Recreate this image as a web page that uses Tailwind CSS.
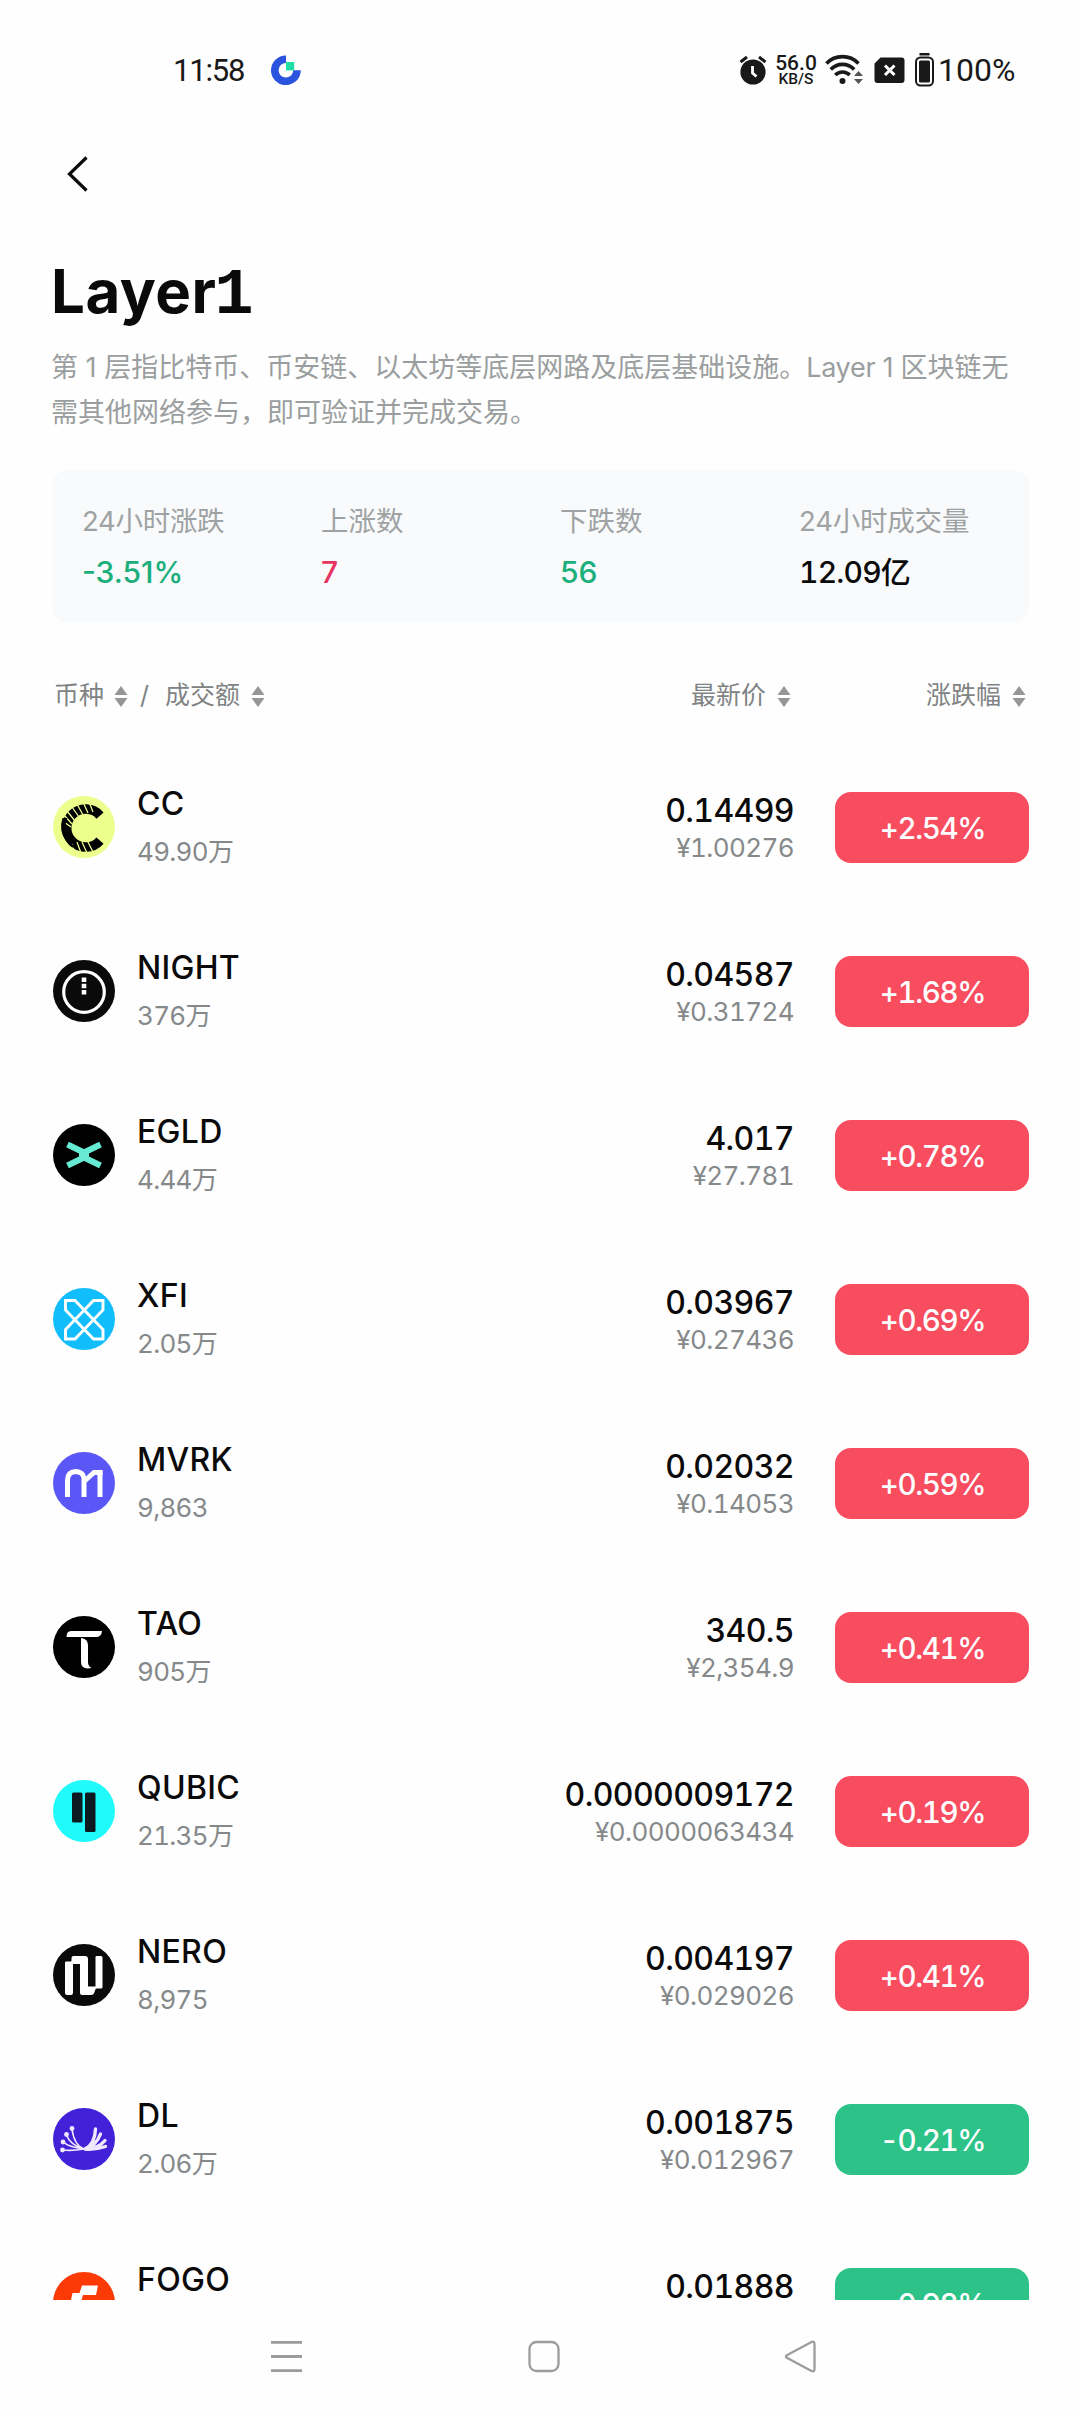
<!DOCTYPE html>
<html lang="zh-Hans">
<head>
    <meta charset="UTF-8">
    <meta name="viewport" content="width=device-width, initial-scale=1.0">
    <title>Layer1</title>
    <script src="https://cdn.jsdelivr.net/npm/@tailwindcss/browser@4"></script>
    <style>
        body {
            font-family: 'Inter', 'Noto Sans CJK SC', sans-serif;
        }
    </style>
</head>
<body class="bg-[#fefefe] text-[#0a0a0a]">
    <div class="w-[1080px] h-[2412px] flex flex-col overflow-hidden">

        <!-- 状态栏 -->
        <header class="h-[120px] shrink-0 flex items-center pt-[20px] pl-[173px] pr-[64px] font-[Roboto] text-[#191919]">
            <span class="text-[31px] leading-none tracking-[-1.200px] w-[98px]">11:58</span>
            <svg class="size-[30px]" viewBox="0 0 30 30">
                <path d="M15 4.2A11.1 11.1 0 1 0 26 15.3" fill="none" stroke="#2a54de" stroke-width="7.6"/>
                <path d="M15 7h8.2v8.4H15z" fill="#20dfa6"/>
            </svg>
            <div class="ml-auto flex items-center">
                <svg class="w-[28px] h-[30px]" viewBox="0 0 28 30">
                    <circle cx="14" cy="17" r="12.6" fill="#191919"/>
                    <path d="M1.5 7 8 2M26.500 7 20 2" stroke="#191919" stroke-width="3" fill="none"/>
                    <path d="M13.500 11v7l4 3.500" stroke="#fff" stroke-width="2.800" fill="none"/>
                </svg>
                <div class="ml-[8px] w-[42px] flex flex-col items-center font-medium mt-[1px]">
                    <span class="text-[21px] leading-[18px]">56.0</span>
                    <span class="text-[15.500px] leading-[15px]">KB/S</span>
                </div>
                <svg class="ml-[8px] w-[38px] h-[32px]" viewBox="0 0 38 32">
                    <g fill="none" stroke="#191919" stroke-width="3.600">
                        <path d="M1.500 9.500a22 22 0 0 1 32 0"/>
                        <path d="M5.800 15.500a16 16 0 0 1 23.400 0"/>
                        <path d="M10.300 21a10 10 0 0 1 14.400 0"/>
                    </g>
                    <circle cx="17.500" cy="27" r="3" fill="#191919"/>
                    <path d="m29 22 4.500-5 4.500 5zM29 25l4.500 5 4.500-5z" fill="#555"/>
                </svg>
                <svg class="ml-[11px] w-[31px] h-[27px]" viewBox="0 0 31 27">
                    <path d="M6.500.5H27.500a3 3 0 0 1 3 3V23a3 3 0 0 1-3 3H3.500a3 3 0 0 1-3-3V6.500z" fill="#191919"/>
                    <path d="m11 8.500 9.500 9.500m0-9.500L11 18" stroke="#fff" stroke-width="3"/>
                </svg>
                <svg class="ml-[10px] w-[19px] h-[34px]" viewBox="0 0 19 34">
                    <path d="M4.500 0h10v2.500h-10z" fill="#191919"/>
                    <rect x="1" y="4.500" width="17" height="28" rx="4.500" fill="none" stroke="#191919" stroke-width="2"/>
                    <rect x="4" y="7.500" width="11" height="22" rx="1.500" fill="#191919"/>
                </svg>
                <span class="ml-[4px] w-[78px] text-[32px] leading-none">100%</span>
            </div>
        </header>

        <nav class="h-[120px] shrink-0 pt-[36px] pl-[66px]">
            <svg class="w-[22px] h-[36px]" viewBox="0 0 22 36">
                <path d="M20.500 1.500 3.500 18l17 16.500" fill="none" stroke="#0a0a0a" stroke-width="3.200"/>
            </svg>
        </nav>

        <section class="shrink-0 px-[51px]">
            <h1 class="h-[104px] pt-[15px] text-[60px] leading-[72px] font-bold tracking-[0.5px]">Layer<span class="font-['Liberation_Mono'] text-[65px] leading-none ml-[-2px]">1</span></h1>
            <p class="h-[126px] pt-px text-[27px] leading-[45px] text-[#9b9e9f] whitespace-nowrap">第 1 层指比特币、币安链、以太坊等底层网路及底层基础设施。<span class="tracking-[-0.3px]">Layer 1 </span>区块链无<br>需其他网络参与，即可验证并完成交易。</p>
            <div class="h-[153px] grid grid-cols-[239px_239px_239px_auto] bg-[#f8fafc] rounded-[16px] pl-[30px] ml-px whitespace-nowrap">
                <div class="pt-[30px]">
                    <p class="text-[27.500px] leading-[43px] text-[#9fa2a3] tracking-[-0.3px]">24小时涨跌</p>
                    <p class="text-[30px] leading-[59px] font-medium text-[#1aaf7b]">-3.51%</p>
                </div>
                <div class="pt-[30px]">
                    <p class="text-[27.500px] leading-[43px] text-[#9fa2a3]">上涨数</p>
                    <p class="text-[30px] leading-[59px] font-medium text-[#e8335f]">7</p>
                </div>
                <div class="pt-[30px]">
                    <p class="text-[27.500px] leading-[43px] text-[#9fa2a3]">下跌数</p>
                    <p class="text-[30px] leading-[59px] font-medium text-[#1aaf7b]">56</p>
                </div>
                <div class="pt-[30px]">
                    <p class="text-[27.500px] leading-[43px] text-[#9fa2a3] tracking-[-0.2px]">24小时成交量</p>
                    <p class="text-[30px] leading-[59px] font-medium tabular-nums tracking-[-0.8px]">12.09亿</p>
                </div>
            </div>
        </section>

        <!-- 表头 -->
        <div class="h-[122px] shrink-0 flex items-center pt-[24px] pl-[54px] text-[25px] text-[#808384]">
            <span class="sort w-[86px] flex items-center gap-[10px]">币种</span>
            <span class="w-[25px]">/</span>
            <span class="sort flex items-center gap-[11px]">成交额</span>
            <span class="sort ml-auto flex items-center gap-[11px]">最新价</span>
            <span class="sort w-[289px] pr-[54px] flex items-center justify-end gap-[11px]">涨跌幅</span>
        </div>

        <main id="coin-list" class="h-[1555px] shrink-0 overflow-hidden"></main>

        <!-- 系统导航键 -->
        <footer class="grow flex items-start justify-between pt-[40px] pl-[270px] pr-[263px]">
            <svg class="size-[33px]" viewBox="0 0 33 33" stroke="#9c9c9c" stroke-width="2.800">
                <path d="M1 2.400h31M1 16.500h31M1 30.600h31"/>
            </svg>
            <svg class="size-[33px]" viewBox="0 0 33 33" fill="none" stroke="#9c9c9c" stroke-width="2.300">
                <rect x="2.500" y="2" width="29" height="29" rx="7"/>
            </svg>
            <svg class="size-[33px]" viewBox="0 0 33 33" fill="none" stroke="#9c9c9c" stroke-width="2.300" stroke-linejoin="round">
                <path d="M2.800 15.200 27.500 2Q30.500 1 30.500 4V29Q30.500 32 27.500 31L2.800 17.800Q1 16.500 2.800 15.200z"/>
            </svg>
        </footer>
    </div>

    <script>
        // 图标画布均为 62x62
        const icons = {
            CC: `<circle cx="31" cy="31" r="31" fill="#ecfe8c"/>
                <path d="M47 19.500A19 19 0 1 0 47 44.500" fill="none" stroke="#000" stroke-width="9.500"/>
                <path d="M14 15l8 10M19 11l7 10M24 8l6 11M30 6l5 11M36 6l4 10M12 20l7 8M11 26l7 5M22 57l-3-9M28 57l-4-11M34 57l-5-11M40 56l-6-12" stroke="#ecfe8c" stroke-width="1.300"/>
                <path d="M9.500 22q-4 12 3 22 6 8 13 10-12-9-13-21-.5-6 2-11z" fill="#000"/>`,
            NIGHT: `<circle cx="31" cy="31" r="31" fill="#0a0a0a"/>
                <circle cx="31" cy="32" r="20.300" fill="none" stroke="#fff" stroke-width="3.200"/>
                <path d="M28.700 17.500h4.600v4.500h-4.600zM28.700 23.800h4.600v4.500h-4.600zM28.700 30h4.600v4.500h-4.600z" fill="#fff"/>`,
            EGLD: `<circle cx="31" cy="31" r="31" fill="#000"/>
                <path d="m14.500 20.500 16.500 8 16.500-8M14.500 41.500 31 33.500l16.500 8" fill="none" stroke="#67ead4" stroke-width="6.200"/>
                <path d="M26 27.500h10v7H26z" fill="#67ead4"/>`,
            XFI: `<circle cx="31" cy="31" r="31" fill="#11bdfb"/>
                <path d="M12.500 12.500h9.500l28 29v9.500h-9.500l-28-29zM50 12.500h-9.500l-28 29v9.500h9.500l28-29z" fill="none" stroke="#fff" stroke-width="2.900"/>`,
            MVRK: `<circle cx="31" cy="31" r="31" fill="#5b56f6"/>
                <path d="M14.500 45V28q0-8 8-8.500 8 .5 8.500 7V45M31 29.500 41 20.500h6V45" fill="none" stroke="#fff" stroke-width="5"/>
                <path d="M40 18.500h9.500V23H43z" fill="#fff"/>`,
            TAO: `<circle cx="31" cy="31" r="31" fill="#000"/>
                <path d="M18 15h31q-.5 6-6 6H13.500q0-6 4.500-6z" fill="#fff"/>
                <path d="M28 22q7 1 7 7v17q0 4 3.500 6-10.500 2-10.500-6z" fill="#fff"/>`,
            QUBIC: `<circle cx="31" cy="31" r="31" fill="#20fafa"/>
                <rect x="19" y="12.500" width="10.500" height="30" rx="1.500" fill="#0c1a22"/>
                <rect x="32" y="12.500" width="10.500" height="39.500" rx="1.500" fill="#0c1a22"/>`,
            NERO: `<circle cx="31" cy="31" r="31" fill="#0a0a0a"/>
                <path d="M12 18.500q0-1 1-1h4.500q1 0 1-1V14q0-2 2-2H32q3 0 3 3v27.500h7.500V13q0-1 1-1H48q1.500 0 1.500 1.500V43q0 1.500-1.500 1.500h-4.500q-1 0-1.500 2-1 4.500-4 4.500H29q-2 0-2-2V20h-7v29q0 2-2 2h-4q-2 0-2-2z" fill="#fff"/>`,
            DL: `<circle cx="31" cy="31" r="31" fill="#4222d9"/>
                <g fill="none" stroke="#f0e8ff" stroke-linecap="round">
                    <path d="M31 41Q21 37 19 21M31 41Q17 37 13.500 27M31 41Q15 39 10.500 34M31 41Q20 43 9.500 42" stroke-width="1.600"/>
                    <path d="M32 41Q42 36 42.500 21M32 41Q43 38 47.500 26M32 41Q45 41 52 32.500M32 41Q42 42 52.500 38.500" stroke-width="3.400"/>
                </g>
                <g fill="#f0e8ff"><circle cx="19" cy="20.500" r="2.400"/><circle cx="13.500" cy="26.500" r="2.400"/><circle cx="10" cy="34" r="2.400"/><circle cx="9.500" cy="42" r="2.400"/></g>`,
            FOGO: `<circle cx="31" cy="31" r="31" fill="#fc3a05"/>
                <path d="M29 13.500h16l-2 9.500H30l-1.500 5H18l1.500-7h7z" fill="#fff"/>`
        };

        const coins = [
            ['CC', '49.90万', '0.14499', '¥1.00276', '+2.54%'],
            ['NIGHT', '376万', '0.04587', '¥0.31724', '+1.68%'],
            ['EGLD', '4.44万', '4.017', '¥27.781', '+0.78%'],
            ['XFI', '2.05万', '0.03967', '¥0.27436', '+0.69%'],
            ['MVRK', '9,863', '0.02032', '¥0.14053', '+0.59%'],
            ['TAO', '905万', '340.5', '¥2,354.9', '+0.41%'],
            ['QUBIC', '21.35万', '0.0000009172', '¥0.0000063434', '+0.19%'],
            ['NERO', '8,975', '0.004197', '¥0.029026', '+0.41%'],
            ['DL', '2.06万', '0.001875', '¥0.012967', '-0.21%'],
            ['FOGO', '1.92万', '0.01888', '¥0.13057', '-0.98%']
        ];

        document.getElementById('coin-list').innerHTML = coins.map(([name, volume, price, cny, change]) => `
            <div class="h-[164px] flex items-center pl-[53px] pr-[51px] tabular-nums">
                <svg class="size-[62px] shrink-0" viewBox="0 0 62 62">${icons[name]}</svg>
                <div class="ml-[22px] pt-[2px]">
                    <p class="text-[32px] leading-[48px] font-medium tracking-[0.3px]">${name}</p>
                    <p class="text-[26px] leading-[48px] text-[#86898a] tracking-[-0.7px]">${volume}</p>
                </div>
                <div class="ml-auto pt-[4px] text-right">
                    <p class="text-[32px] leading-[38px] font-medium tracking-[-0.6px]">${price}</p>
                    <p class="text-[26px] leading-[36px] text-[#86898a] tracking-[-0.6px]">${cny}</p>
                </div>
                <div class="ml-[41px] w-[194px] h-[71px] pt-[2px] pl-[1px] rounded-[16px] flex items-center justify-center text-[29.500px] font-medium tracking-[-1.400px] text-white ${change[0] === '+' ? 'bg-[#f84c5f]' : 'bg-[#2cc288]'}">${change}</div>
            </div>`).join('');

        // 排序箭头
        document.querySelectorAll('.sort').forEach(el => {
            el.insertAdjacentHTML('beforeend', '<svg class="w-[14px] h-[21px]" viewBox="0 0 14 21" fill="#949697"><path d="M7 0l6.500 9H.5zM7 21l6.500-9H.5z"/></svg>');
        });
    </script>
</body>
</html>
